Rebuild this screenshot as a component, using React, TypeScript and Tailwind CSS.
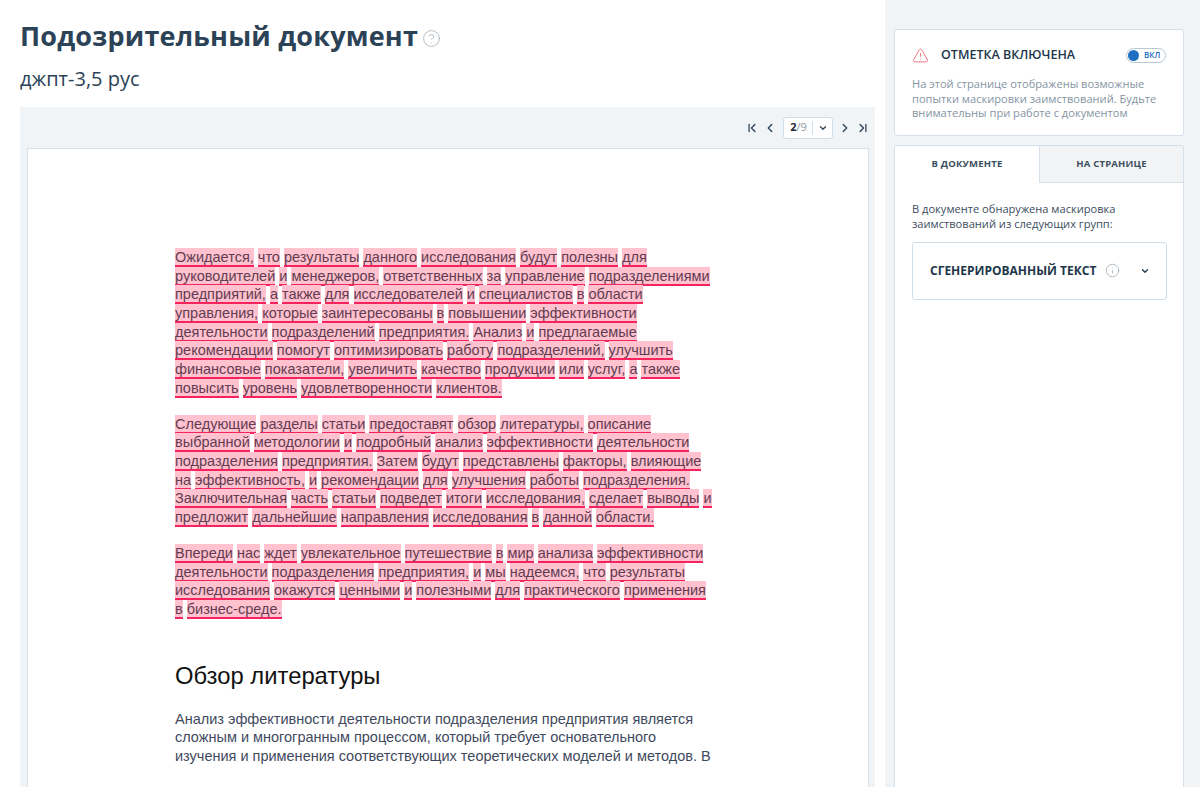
import { ChevronDown, ChevronFirst, ChevronLast, ChevronLeft, ChevronRight, CircleHelp, Info, TriangleAlert } from "lucide-react";

const marked = [
  [
    "Ожидается, что результаты данного исследования будут полезны для",
    "руководителей и менеджеров, ответственных за управление подразделениями",
    "предприятий, а также для исследователей и специалистов в области",
    "управления, которые заинтересованы в повышении эффективности",
    "деятельности подразделений предприятия. Анализ и предлагаемые",
    "рекомендации помогут оптимизировать работу подразделений, улучшить",
    "финансовые показатели, увеличить качество продукции или услуг, а также",
    "повысить уровень удовлетворенности клиентов.",
  ],
  [
    "Следующие разделы статьи предоставят обзор литературы, описание",
    "выбранной методологии и подробный анализ эффективности деятельности",
    "подразделения предприятия. Затем будут представлены факторы, влияющие",
    "на эффективность, и рекомендации для улучшения работы подразделения.",
    "Заключительная часть статьи подведет итоги исследования, сделает выводы и",
    "предложит дальнейшие направления исследования в данной области.",
  ],
  [
    "Впереди нас ждет увлекательное путешествие в мир анализа эффективности",
    "деятельности подразделения предприятия, и мы надеемся, что результаты",
    "исследования окажутся ценными и полезными для практического применения",
    "в бизнес-среде.",
  ],
];

const plain = [
  "Анализ эффективности деятельности подразделения предприятия является",
  "сложным и многогранным процессом, который требует основательного",
  "изучения и применения соответствующих теоретических моделей и методов. В",
];

function MarkedLine({ text }: { text: string }) {
  const words = text.split(" ");
  return (
    <div className="h-[18.7px] whitespace-nowrap">
      {words.map((w, i) => (
        <span key={i}>
          <span className="bg-[#ffc2ce] border-b-2 border-[#f5245f] pt-[1px] text-[#623c52]">{w}</span>
          {i < words.length - 1 ? " " : ""}
        </span>
      ))}
    </div>
  );
}

function DocumentPage() {
  return (
    <div className="ml-[7px] mr-[6px] flex-1 overflow-hidden border border-b-0 border-[#d9dfe6] bg-white pl-[147px] pt-[99px] text-[14.5px] font-['Liberation_Sans',Arial,sans-serif]">
      {marked.map((lines, i) => (
        <div key={i} className="mb-[17.2px] leading-[18.7px]">
          {lines.map((line, j) => (
            <MarkedLine key={j} text={line} />
          ))}
        </div>
      ))}
      <h2 className="mt-[42px] text-[23.8px] leading-[30px] text-[#111111]">Обзор литературы</h2>
      <div className="mt-[19px] leading-[18.7px] text-[#3f4a5e]">
        {plain.map((line, i) => (
          <div key={i} className="whitespace-nowrap">{line}</div>
        ))}
      </div>
    </div>
  );
}

function Pager() {
  return (
    <div className="flex h-[41px] items-center justify-end pr-[5px] text-[#2c4254]">
      <ChevronFirst size={14} strokeWidth={2.2} />
      <ChevronLeft size={14} strokeWidth={2.2} className="ml-[4px]" />
      <div className="ml-[6px] flex h-[22px] w-[50px] items-center rounded-[3px] border border-[#cfdde9] bg-white text-[11px]">
        <div className="flex-1 pl-[1px] text-center">
          <span className="font-bold text-[#1d2b36]">2</span>
          <span className="text-[#8b98a5]">/9</span>
        </div>
        <div className="flex h-[14px] w-[20px] items-center justify-center border-l border-[#cfdde9]">
          <ChevronDown size={10} strokeWidth={3} />
        </div>
      </div>
      <ChevronRight size={14} strokeWidth={2.2} className="ml-[5px]" />
      <ChevronLast size={14} strokeWidth={2.2} className="ml-[4px]" />
    </div>
  );
}

function Sidebar() {
  return (
    <aside className="flex w-[315px] shrink-0 flex-col bg-[#f1f4f7] pl-[9px] pr-[16px] pt-[29px]">
      <div className="h-[107px] rounded-[3px] border border-[#d5e0ea] bg-white px-[17px] pt-[16px]">
        <div className="flex h-[18px] items-center">
          <TriangleAlert size={17} strokeWidth={1.2} className="text-[#f0616d]" />
          <span className="ml-[12px] text-[12.5px] font-semibold text-[#20364a]">ОТМЕТКА ВКЛЮЧЕНА</span>
          <div className="ml-auto flex h-[15px] w-[40px] items-center rounded-full border border-[#b9c7d3] pl-[1px]">
            <span className="h-[11px] w-[11px] rounded-full bg-[#1f6fc0]" />
            <span className="ml-[5px] text-[8px] font-semibold leading-none text-[#1f6fc0]">ВКЛ</span>
          </div>
        </div>
        <p className="mt-[13px] text-[11.1px] leading-[14.5px] text-[#8594a3]">
          На этой странице отображены возможные попытки маскировки заимствований. Будьте внимательны при работе с документом
        </p>
      </div>
      <div className="mt-[9px] flex flex-1 flex-col overflow-hidden rounded-t-[3px] border border-b-0 border-[#d5e0ea] bg-white">
        <div className="flex h-[37px] shrink-0 text-[9.5px] font-bold tracking-[0.2px] text-[#3c4f60]">
          <div className="flex w-[144px] items-center justify-center">В ДОКУМЕНТЕ</div>
          <div className="flex flex-1 items-center justify-center border-b border-l border-[#d5e0ea] bg-[#f1f3f5]">НА СТРАНИЦЕ</div>
        </div>
        <div className="pl-[17px] pr-[16px] pt-[19px]">
          <p className="text-[11.1px] leading-[14.8px] text-[#3b4d5e]">
            В документе обнаружена маскировка заимствований из следующих групп:
          </p>
          <div className="mt-[10px] flex h-[58px] items-center rounded-[3px] border border-[#cfdde9] pl-[17px] text-[#20364a]">
            <span className="text-[12px] font-bold">СГЕНЕРИРОВАННЫЙ ТЕКСТ</span>
            <Info size={15} strokeWidth={1} className="ml-[9px] text-[#8b98a5]" />
            <ChevronDown size={10} strokeWidth={3} className="ml-[20px]" />
          </div>
        </div>
      </div>
    </aside>
  );
}

export default function App() {
  return (
    <div className="flex h-[787px] w-[1200px] overflow-hidden bg-white font-['Open_Sans',sans-serif]">
      <main className="flex w-[885px] shrink-0 flex-col pl-[20px] pr-[10px]">
        <div className="flex h-[55px] items-end">
          <h1 className="text-[27px] font-bold leading-[38px] tracking-[0.2px] text-[#2b4257]">Подозрительный документ</h1>
          <CircleHelp size={19} strokeWidth={1} className="mb-[7px] ml-[4px] text-[#a3adb6]" />
        </div>
        <div className="mt-[8px] h-[44px] text-[20px] leading-[32px] text-[#2b4257]">джпт-3,5 рус</div>
        <section className="flex min-h-0 flex-1 flex-col bg-[#f1f4f7]">
          <Pager />
          <DocumentPage />
        </section>
      </main>
      <Sidebar />
    </div>
  );
}
